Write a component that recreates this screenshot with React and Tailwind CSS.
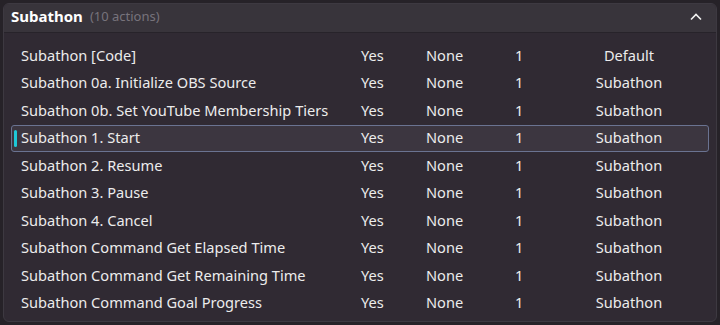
import React from "react";

const rows = [
  { name: "Subathon [Code]", group: "Default" },
  { name: "Subathon 0a. Initialize OBS Source", group: "Subathon" },
  { name: "Subathon 0b. Set YouTube Membership Tiers", group: "Subathon" },
  { name: "Subathon 1. Start", group: "Subathon", selected: true },
  { name: "Subathon 2. Resume", group: "Subathon" },
  { name: "Subathon 3. Pause", group: "Subathon" },
  { name: "Subathon 4. Cancel", group: "Subathon" },
  { name: "Subathon Command Get Elapsed Time", group: "Subathon" },
  { name: "Subathon Command Get Remaining Time", group: "Subathon" },
  { name: "Subathon Command Goal Progress", group: "Subathon" },
];

const App = () => {
  return (
    <div
      className="w-[720px] h-[325px] bg-[#262228] p-[3px]"
      style={{ fontFamily: '"Noto Sans", "Open Sans", sans-serif' }}
    >
      <div className="h-full rounded-md border border-[#3d3941] bg-[#302a33] overflow-hidden">
        <div className="h-[29px] bg-[#38343b] border-b border-[#27232a] flex items-center px-[7px] pb-[3px]">
          <span className="text-white font-bold text-[15px]">Subathon</span>
          <span className="ml-[7px] text-[13px] text-[#77737b]">(10 actions)</span>
          <svg className="ml-auto mr-[6px]" width="14" height="10" viewBox="0 0 14 10">
            <path d="M2 7.5 L7 2.5 L12 7.5" fill="none" stroke="#f0f0f0" strokeWidth="1.6" />
          </svg>
        </div>
        <div className="pt-[9px] px-[7px]">
          {rows.map((r) => (
            <div
              key={r.name}
              className={
                "relative h-[27.5px] flex items-center text-[14.6px] text-[#ececec] rounded-[3px] border " +
                (r.selected ? "border-[#6a7391] bg-[#3c3640]" : "border-transparent")
              }
            >
              {r.selected && (
                <span className="absolute left-[2px] top-[4px] h-[17px] w-[3px] rounded-full bg-[#1ec8d8]" />
              )}
              <span className="w-[349px] pl-[9px] whitespace-nowrap">{r.name}</span>
              <span className="w-[65px]">Yes</span>
              <span className="w-[89px]">None</span>
              <span className="w-[54px]">1</span>
              <span className="w-[120px] text-center">{r.group}</span>
            </div>
          ))}
        </div>
      </div>
    </div>
  );
};

export default App;
